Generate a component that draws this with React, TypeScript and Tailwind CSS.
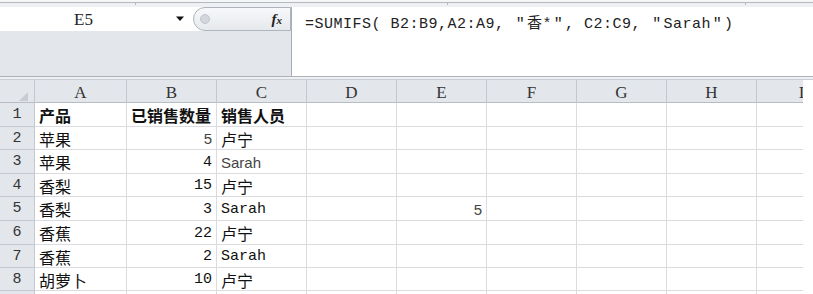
import React from "react";

const cols = ["A", "B", "C", "D", "E", "F", "G", "H", "I"];
const rowHeights = [24, 23, 24, 23, 24, 24, 23, 23];

type Cell = { text: string; font: "cjk" | "mono" | "sans"; right?: boolean; bold?: boolean };

const data: Record<number, Record<string, Cell>> = {
  1: {
    A: { text: "产品", font: "cjk", bold: true },
    B: { text: "已销售数量", font: "cjk", bold: true },
    C: { text: "销售人员", font: "cjk", bold: true },
  },
  2: { A: { text: "苹果", font: "cjk" }, B: { text: "5", font: "sans", right: true }, C: { text: "卢宁", font: "cjk" } },
  3: { A: { text: "苹果", font: "cjk" }, B: { text: "4", font: "mono", right: true }, C: { text: "Sarah", font: "sans" } },
  4: { A: { text: "香梨", font: "cjk" }, B: { text: "15", font: "mono", right: true }, C: { text: "卢宁", font: "cjk" } },
  5: {
    A: { text: "香梨", font: "cjk" },
    B: { text: "3", font: "mono", right: true },
    C: { text: "Sarah", font: "mono" },
    E: { text: "5", font: "sans", right: true },
  },
  6: { A: { text: "香蕉", font: "cjk" }, B: { text: "22", font: "mono", right: true }, C: { text: "卢宁", font: "cjk" } },
  7: { A: { text: "香蕉", font: "cjk" }, B: { text: "2", font: "mono", right: true }, C: { text: "Sarah", font: "mono" } },
  8: { A: { text: "胡萝卜", font: "cjk" }, B: { text: "10", font: "mono", right: true }, C: { text: "卢宁", font: "cjk" } },
};

const fontClass = {
  cjk: "font-['Noto_Sans_CJK_SC',sans-serif] text-[16px]",
  mono: "font-['Liberation_Mono','Noto_Sans_CJK_SC',monospace] text-[15px]",
  sans: "font-['Liberation_Sans',sans-serif] text-[15px]",
};

const gridCols = "grid grid-cols-[35px_92px_90px_90px_90px_90px_90px_90px_90px_90px]";

// full-width quote as in the original formula bar
const Q = () => <span className="inline-block w-[13px] text-center">″</span>;

export default function App() {
  return (
    <div className="w-[813px] h-[294px] overflow-hidden bg-white text-[#222] font-['Liberation_Mono',monospace]">
      {/* ribbon edge */}
      <div className="h-[7px] bg-[#eef0f3] border-t-[2px] border-t-[#f4f5f7] relative">
        <div className="h-px bg-[#b4b9c0]" />
        <div className="absolute left-[135px] top-0 h-[3px] w-px bg-[#b4b9c0]" />
        <div className="absolute left-[447px] top-0 h-[3px] w-px bg-[#b4b9c0]" />
        <div className="absolute left-[745px] top-0 h-[3px] w-px bg-[#b4b9c0]" />
      </div>

      {/* name box + formula bar */}
      <div className="flex h-[69px]">
        <div className="w-[291px] flex flex-col bg-[#e3e6eb]">
          <div className="h-[24px] flex items-center bg-white">
            <div className="w-[167px] text-center font-['Liberation_Serif',serif] text-[17px] leading-none">E5</div>
            <svg width="10" height="6" viewBox="0 0 10 6" className="ml-[8px]">
              <path d="M1 0.5 L9 0.5 L5 5 Z" fill="#111" />
            </svg>
            <div className="ml-[8px] flex-1 h-full flex items-center rounded-l-full border border-[#aeb4bc] bg-gradient-to-b from-[#f7f8fa] to-[#e6e9ed] pl-[6px]">
              <div className="w-[10px] h-[10px] rounded-full bg-[#d3d7dc] border border-[#c1c6cc]" />
              <div className="ml-auto mr-[8px] font-['Liberation_Serif',serif] italic font-bold text-[15px] leading-none">
                f<span className="text-[11px]">x</span>
              </div>
            </div>
          </div>
        </div>
        <div className="flex-1 border-l border-[#a9aeb5] bg-white pl-[13px] pt-[5px] text-[15px] leading-[20px] tracking-[0.5px] whitespace-nowrap font-['Liberation_Mono','Noto_Sans_CJK_SC',monospace]">
          =SUMIFS( B2:B9,A2:A9, <Q />
          <span className="font-['Noto_Sans_CJK_SC',sans-serif]">香</span>*<Q />, C2:C9, <Q />Sarah<Q />)
        </div>
      </div>

      <div className="h-[4px] border-t border-[#aeb3ba] bg-[#eef0f3] border-b border-b-[#c9cdd3]" />

      {/* sheet, clipped at the window edge */}
      <div className="w-[803px] overflow-hidden">
        <div className="w-[847px]">
          <div className={`${gridCols} h-[23px] bg-[#e3e6eb] border-b border-[#b8bdc4]`}>
            <div className="border-r border-[#c3c8ce] relative">
              <svg width="9" height="9" viewBox="0 0 9 9" className="absolute right-[6px] bottom-[5px]">
                <path d="M9 0 L9 9 L0 9 Z" fill="#c8ccd1" />
              </svg>
            </div>
            {cols.map((c) => (
              <div
                key={c}
                className="border-r border-[#c3c8ce] flex items-center justify-center font-['Liberation_Serif',serif] text-[17px] text-[#333]"
              >
                {c}
              </div>
            ))}
          </div>

          {rowHeights.map((h, i) => {
            const r = i + 1;
            return (
              <div key={r} className={gridCols} style={{ height: h }}>
                <div className="bg-[#e3e6eb] border-r border-b border-[#c3c8ce] flex items-center justify-center text-[15px] leading-none text-[#333]">
                  {r}
                </div>
                {cols.map((c) => {
                  const cell = data[r]?.[c];
                  return (
                    <div
                      key={c}
                      className={`border-r border-b border-[#dadcdf] flex items-center pt-[1px] whitespace-nowrap ${
                        cell?.right ? "justify-end pr-[4px]" : "pl-[4px]"
                      }`}
                    >
                      {cell && (
                        <span
                          className={`${fontClass[cell.font]} leading-none ${cell.bold ? "font-bold" : ""} ${
                            cell.font === "sans" ? "text-[#444]" : "text-[#111]"
                          }`}
                        >
                          {cell.text}
                        </span>
                      )}
                    </div>
                  );
                })}
              </div>
            );
          })}
          <div className={`${gridCols} h-[4px]`}>
            <div className="bg-[#e3e6eb] border-r border-[#c3c8ce]" />
            {cols.map((c) => (
              <div key={c} className="border-r border-[#dadcdf]" />
            ))}
          </div>
        </div>
      </div>
    </div>
  );
}
